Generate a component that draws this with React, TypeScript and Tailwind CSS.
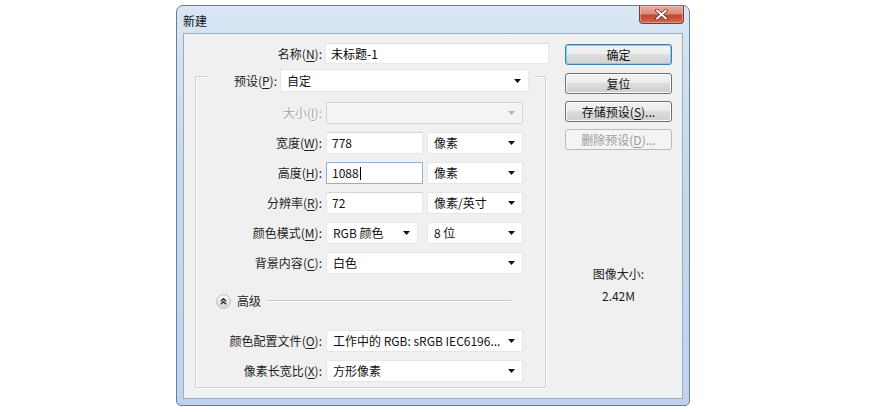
import type { ReactNode } from "react";

const ui = "font-['Noto_Sans_CJK_SC','Noto_Sans',sans-serif] text-[12px] leading-none";

// label text with the access key underlined, e.g. 名称(N):
function Hotkey({ text, k }: { text: string; k: string }) {
  return (
    <>
      {text}(<span className="underline underline-offset-[2px]">{k}</span>):
    </>
  );
}

function Arrow({ disabled }: { disabled?: boolean }) {
  return (
    <svg width="7" height="4" viewBox="0 0 7 4" className="shrink-0">
      <path d="M0 0h7L3.5 4z" fill={disabled ? "#b4b4b4" : "#111"} />
    </svg>
  );
}

function Select({ value, w, h = "h-[22px]", disabled }: { value?: string; w: string; h?: string; disabled?: boolean }) {
  return (
    <div
      className={`${w} ${h} flex items-center justify-between pl-[6px] pr-[7px] border ${
        disabled ? "bg-[#f4f4f4] border-[#d4d4d4] rounded-[2px]" : "bg-white border-[#e6e6e6]"
      }`}
    >
      <span className="text-[#111] whitespace-nowrap">{value}</span>
      <Arrow disabled={disabled} />
    </div>
  );
}

function Field({ value, w, focused }: { value: string; w: string; focused?: boolean }) {
  return (
    <div
      className={`${w} h-[22px] flex items-center pl-[5px] bg-white border ${
        focused ? "border-[#8fb2d6]" : "border-[#e3e9ef] border-t-[#d2d4da]"
      }`}
    >
      <span className="text-[#111]">{value}</span>
      {focused && <span className="ml-[1px] w-px h-[13px] bg-black" />}
    </div>
  );
}

function Row({ label, children, className = "" }: { label: ReactNode; children: ReactNode; className?: string }) {
  return (
    <div className={`flex items-center ${className}`}>
      <div className="w-[126px] text-right text-[#1e1e1e] whitespace-nowrap">{label}</div>
      <div className="ml-[4px] flex gap-[4px]">{children}</div>
    </div>
  );
}

function Button({ children, primary, disabled, className = "" }: { children: ReactNode; primary?: boolean; disabled?: boolean; className?: string }) {
  const look = disabled
    ? "border-[#b8bcbf] bg-[#f4f4f4] text-[#9a9a9a]"
    : primary
      ? "border-[#3c7fb1] shadow-[inset_0_0_0_1px_#7fd0f5] bg-[linear-gradient(#f4f4f4_0%,#ececec_50%,#dedede_50%,#d2d2d2_100%)] text-[#111]"
      : "border-[#707070] shadow-[inset_0_0_0_1px_#fbfbfb] bg-[linear-gradient(#f2f2f2_0%,#ebebeb_50%,#dddddd_50%,#cfcfcf_100%)] text-[#111]";
  return (
    <div className={`h-[21px] w-[107px] rounded-[3px] border flex items-center justify-center ${look} ${className}`}>
      {children}
    </div>
  );
}

export default function App() {
  return (
    <div className={`min-h-[412px] w-[870px] bg-white pl-[176px] pt-[5px] ${ui}`}>
      <div className="w-[514px] h-[401px] flex flex-col rounded-t-[7px] rounded-b-[5px] border border-[#6b7d92] bg-[linear-gradient(#d9e6f4,#c6d9ee_40%,#bfd4ec)]">
        {/* title bar */}
        <div className="h-[27px] flex items-start justify-between pl-[6px] pr-[5px]">
          <span className="mt-[9px] text-[#101010]">新建</span>
          <div className="w-[45px] h-[18px] rounded-b-[4px] border border-t-0 border-[#7a3a30] bg-[linear-gradient(#eab0a3_0%,#d98a78_45%,#c4452f_55%,#d06a52_100%)] shadow-[inset_0_0_0_1px_#f2c7bd80] flex items-center justify-center">
            <svg width="13" height="11" viewBox="0 0 13 11">
              <path d="M2 1.5 11 9.5M11 1.5 2 9.5" stroke="#5a2a22" strokeWidth="3.6" strokeLinecap="round" />
              <path d="M2 1.5 11 9.5M11 1.5 2 9.5" stroke="#fff" strokeWidth="2" strokeLinecap="round" />
            </svg>
          </div>
        </div>

        {/* client area */}
        <div className="mx-[6px] h-[366px] border border-[#99adc6] bg-[#f0f0f0] flex">
          <div className="w-[381px] pl-[11px] pt-[9px]">
            <div className="flex items-center">
              <div className="w-[127px] text-right text-[#1e1e1e]">
                <Hotkey text="名称" k="N" />
              </div>
              <div className="ml-[3px] w-[224px] h-[21px] flex items-center pl-[5px] bg-white border border-[#e3e9ef] border-t-[#d8dadf]">
                未标题-1
              </div>
            </div>

            <div className="mt-[12px] w-[351px] h-[312px] border border-[#cfcfcf] shadow-[1px_1px_0_#fff,inset_1px_1px_0_#fff]">
              <div className="-mt-[8px] ml-[12px] w-[326px] pr-[5px] flex items-center bg-[#f0f0f0]">
                <div className="flex-1 text-right text-[#1e1e1e]">
                  <Hotkey text="预设" k="P" />
                </div>
                <div className="ml-[3px]">
                  <Select value="自定" w="w-[249px]" h="h-[23px]" />
                </div>
              </div>

              <Row className="mt-[10px]" label={<span className="text-[#a8a8a8] [text-shadow:1px_1px_0_#fff]">大小(<span className="underline underline-offset-[2px]">I</span>):</span>}>
                <Select w="w-[197px]" disabled />
              </Row>
              <Row className="mt-[8px]" label={<Hotkey text="宽度" k="W" />}>
                <Field value="778" w="w-[97px]" />
                <Select value="像素" w="w-[96px]" />
              </Row>
              <Row className="mt-[8px]" label={<Hotkey text="高度" k="H" />}>
                <Field value="1088" w="w-[97px]" focused />
                <Select value="像素" w="w-[96px]" />
              </Row>
              <Row className="mt-[8px]" label={<Hotkey text="分辨率" k="R" />}>
                <Field value="72" w="w-[97px]" />
                <Select value="像素/英寸" w="w-[96px]" />
              </Row>
              <Row className="mt-[8px]" label={<Hotkey text="颜色模式" k="M" />}>
                <Select value="RGB 颜色" w="w-[92px]" />
                <div className="ml-[5px]">
                  <Select value="8 位" w="w-[96px]" />
                </div>
              </Row>
              <Row className="mt-[8px]" label={<Hotkey text="背景内容" k="C" />}>
                <Select value="白色" w="w-[197px]" />
              </Row>

              {/* advanced section divider */}
              <div className="mt-[19px] h-[16px] flex items-center pl-[20px]">
                <svg width="15" height="15" viewBox="0 0 15 15">
                  <defs>
                    <linearGradient id="adv" x1="0" y1="0" x2="0" y2="1">
                      <stop offset="0" stopColor="#ffffff" />
                      <stop offset="1" stopColor="#d9d9d9" />
                    </linearGradient>
                  </defs>
                  <circle cx="7.5" cy="7.5" r="6.8" fill="url(#adv)" stroke="#b9b9b9" />
                  <path d="M4.8 7.2 7.5 4.7 10.2 7.2M4.8 10.2 7.5 7.7 10.2 10.2" fill="none" stroke="#2a2a2a" strokeWidth="1.3" />
                </svg>
                <span className="ml-[6px] text-[#1e1e1e]">高级</span>
                <div className="ml-[6px] w-[244px] h-[2px] border-t border-[#c8c8c8] border-b-white border-b" />
              </div>

              <Row className="mt-[21px]" label={<Hotkey text="颜色配置文件" k="O" />}>
                <Select value="工作中的 RGB: sRGB IEC6196..." w="w-[197px]" />
              </Row>
              <Row className="mt-[8px]" label={<Hotkey text="像素长宽比" k="X" />}>
                <Select value="方形像素" w="w-[197px]" />
              </Row>
            </div>
          </div>

          <div className="w-[107px] pt-[10px] flex flex-col items-center">
            <Button primary>确定</Button>
            <Button className="mt-[8px]">复位</Button>
            <Button className="mt-[7px]">
              存储预设(<span className="underline underline-offset-[2px]">S</span>)...
            </Button>
            <Button className="mt-[7px]" disabled>
              删除预设(<span className="underline underline-offset-[2px]">D</span>)...
            </Button>
            <div className="mt-[118px] text-[#1e1e1e]">图像大小:</div>
            <div className="mt-[10px] text-[#1e1e1e]">2.42M</div>
          </div>
        </div>
      </div>
    </div>
  );
}
